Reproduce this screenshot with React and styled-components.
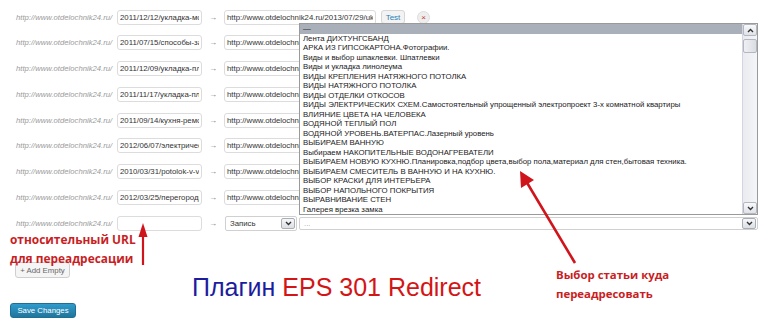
import React from 'react';
import styled, { createGlobalStyle } from 'styled-components';

const GlobalStyle = createGlobalStyle`
  body {
    margin: 0;
    background: #fff;
    font-family: "Liberation Sans", Arial, sans-serif;
  }
`;

const Page = styled.div`
  position: relative;
  width: 768px;
  height: 330px;
  overflow: hidden;
  padding-top: 9px;
  box-sizing: border-box;
`;

const Rows = styled.div`
  display: flex;
  flex-direction: column;
  gap: 9.75px;
`;

const Row = styled.div`
  display: flex;
  align-items: center;
  height: 16px;
  padding-left: 16px;
`;

const SiteLabel = styled.span`
  width: 101px;
  font-size: 7.7px;
  font-style: italic;
  color: #9a9a9a;
  white-space: nowrap;
`;

const Field = styled.input`
  box-sizing: border-box;
  width: ${p => p.$width}px;
  height: 15px;
  padding: 0 2px;
  border: 1px solid #dcdcdc;
  border-radius: 3px;
  font-family: "Liberation Sans", Arial, sans-serif;
  font-size: 7.8px;
  color: #333;
  background: #fff;
  outline: none;
`;

const Arrow = styled.span`
  width: 22px;
  text-align: center;
  font-size: 8px;
  color: #777;
`;

const TestButton = styled.button`
  box-sizing: border-box;
  margin-left: 5px;
  width: 24px;
  height: 14px;
  padding: 0;
  border: 1px solid #d6d6d6;
  border-radius: 3px;
  background: #f3f3f3;
  color: #2a7fb5;
  font-family: "Liberation Sans", Arial, sans-serif;
  font-size: 8px;
`;

const RemoveButton = styled.button`
  box-sizing: border-box;
  margin-left: 12px;
  width: 13px;
  height: 13px;
  padding: 0;
  border: 1px solid #ddd;
  border-radius: 50%;
  background: #eee;
  color: #c0392b;
  font-size: 8px;
  line-height: 11px;
`;

const SelectBox = styled.div`
  box-sizing: border-box;
  display: flex;
  align-items: center;
  justify-content: space-between;
  margin-left: ${p => p.$gap}px;
  width: ${p => p.$width}px;
  height: ${p => p.$height}px;
  padding: 0 1px 0 4px;
  border: 1px solid #d0d0d0;
  border-radius: 2px;
  background: #fff;
  font-size: 7.8px;
  color: ${p => (p.$muted ? '#aaa' : '#333')};
`;

const DropButton = styled.span`
  box-sizing: border-box;
  display: flex;
  align-items: center;
  justify-content: center;
  width: 14px;
  height: 11px;
  border: 1px solid #a9adb4;
  border-radius: 2px;
  background: linear-gradient(#f6f7f9, #dcdfe4);
`;

const DropList = styled.div`
  position: absolute;
  left: 299px;
  top: 23px;
  width: 459px;
  height: 192px;
  box-sizing: border-box;
  display: flex;
  border: 1px solid #9a9a9a;
  background: #fff;
`;

const Options = styled.div`
  flex: 1;
  display: flex;
  flex-direction: column;
`;

const Option = styled.div`
  height: 9.6px;
  line-height: 9.6px;
  padding-left: 3px;
  font-size: 7.8px;
  color: #1a1a1a;
  white-space: nowrap;
  overflow: hidden;
  background: ${p => (p.$selected ? '#aab0b9' : 'transparent')};
`;

const Scrollbar = styled.div`
  width: 14px;
  display: flex;
  flex-direction: column;
  justify-content: space-between;
  background: linear-gradient(90deg, #e9ebf0, #f4f5f8);
  border-left: 1px solid #d3d6dc;
`;

const ScrollTop = styled.div`
  display: flex;
  flex-direction: column;
  gap: 3px;
`;

const ScrollButton = styled.div`
  box-sizing: border-box;
  display: flex;
  align-items: center;
  justify-content: center;
  height: 12px;
  border: 1px solid #b3b7bf;
  border-radius: 2px;
  background: linear-gradient(#f8f9fb, #dfe2e7);
`;

const Thumb = styled.div`
  box-sizing: border-box;
  height: 14px;
  border: 1px solid #b3b7bf;
  border-radius: 2px;
  background: linear-gradient(90deg, #eef0f3, #dadde3);
`;

const AddButton = styled.button`
  box-sizing: border-box;
  display: block;
  margin: 31px 0 0 15px;
  width: 55px;
  height: 16px;
  padding: 0;
  border: 1px solid #cfcfcf;
  border-radius: 3px;
  background: #f5f5f5;
  color: #666;
  font-family: "Liberation Sans", Arial, sans-serif;
  font-size: 7.8px;
`;

const SaveButton = styled.button`
  box-sizing: border-box;
  display: block;
  margin: 25px 0 0 10px;
  width: 66px;
  height: 15px;
  padding: 0;
  border: 1px solid #1f6f94;
  border-radius: 3px;
  background: linear-gradient(#2f9ccd, #21759b);
  color: #fff;
  font-family: "Liberation Sans", Arial, sans-serif;
  font-size: 7.8px;
`;

const Headline = styled.div`
  position: absolute;
  left: 192px;
  top: 272px;
  font-size: 25px;
  line-height: 30px;
  white-space: nowrap;
  color: #d31515;
`;

const Blue = styled.span`
  color: #1c1c9e;
`;

const Note = styled.div`
  position: absolute;
  left: ${p => p.$left}px;
  top: ${p => p.$top}px;
  font-family: "Open Sans", "Noto Sans", sans-serif;
  font-weight: 700;
  font-size: ${p => p.$size}px;
  line-height: ${p => p.$lh}px;
  color: #c81e24;
  white-space: nowrap;
`;

const Overlay = styled.svg`
  position: absolute;
  left: 0;
  top: 0;
  pointer-events: none;
`;

const Chevron = ({ up }) => (
  <svg width="7" height="5" viewBox="0 0 7 5">
    <polyline
      points={up ? '1,4 3.5,1.5 6,4' : '1,1 3.5,3.5 6,1'}
      fill="none"
      stroke="#333"
      strokeWidth="1.4"
    />
  </svg>
);

const site = 'http://www.otdelochnik24.ru/';

// only the first row's Test / remove buttons show, the open list covers the rest
const redirects = [
  { from: '2011/12/12/укладка-мозаики', to: 'http://www.otdelochnik24.ru/2013/07/29/ukladka', tools: true },
  { from: '2011/07/15/способы-замены', to: 'http://www.otdelochnik24.ru/' },
  { from: '2011/12/09/укладка-плитки', to: 'http://www.otdelochnik24.ru/' },
  { from: '2011/11/17/укладка-плитки', to: 'http://www.otdelochnik24.ru/' },
  { from: '2011/09/14/кухня-ремонт', to: 'http://www.otdelochnik24.ru/' },
  { from: '2012/06/07/электричество', to: 'http://www.otdelochnik24.ru/' },
  { from: '2010/03/31/potolok-v-vannoj', to: 'http://www.otdelochnik24.ru/' },
  { from: '2012/03/25/перегородки', to: 'http://www.otdelochnik24.ru/' },
];

const posts = [
  'Лента ДИХТУНГСБАНД',
  'АРКА ИЗ ГИПСОКАРТОНА.Фотографии.',
  'Виды и выбор шпаклевки. Шпатлевки',
  'Виды и укладка линолеума',
  'ВИДЫ КРЕПЛЕНИЯ НАТЯЖНОГО ПОТОЛКА',
  'ВИДЫ НАТЯЖНОГО ПОТОЛКА',
  'ВИДЫ ОТДЕЛКИ ОТКОСОВ',
  'ВИДЫ ЭЛЕКТРИЧЕСКИХ СХЕМ.Самостоятельный упрощенный электропроект 3-х комнатной квартиры',
  'ВЛИЯНИЕ ЦВЕТА НА ЧЕЛОВЕКА',
  'ВОДЯНОЙ ТЕПЛЫЙ ПОЛ',
  'ВОДЯНОЙ УРОВЕНЬ.ВАТЕРПАС.Лазерный уровень',
  'ВЫБИРАЕМ ВАННУЮ',
  'Выбираем НАКОПИТЕЛЬНЫЕ ВОДОНАГРЕВАТЕЛИ',
  'ВЫБИРАЕМ НОВУЮ КУХНЮ.Планировка,подбор цвета,выбор пола,материал для стен,бытовая техника.',
  'ВЫБИРАЕМ СМЕСИТЕЛЬ В ВАННУЮ И НА КУХНЮ.',
  'ВЫБОР КРАСКИ ДЛЯ ИНТЕРЬЕРА',
  'ВЫБОР НАПОЛЬНОГО ПОКРЫТИЯ',
  'ВЫРАВНИВАНИЕ СТЕН',
  'Галерея врезка замка',
];

export default function App() {
  return (
    <>
      <GlobalStyle />
      <Page>
        <Rows>
          {redirects.map((r, i) => (
            <Row key={i}>
              <SiteLabel>{site}</SiteLabel>
              <Field $width={85} defaultValue={r.from} readOnly />
              <Arrow>→</Arrow>
              <Field $width={152} defaultValue={r.to} readOnly />
              {r.tools && (
                <>
                  <TestButton>Test</TestButton>
                  <RemoveButton>×</RemoveButton>
                </>
              )}
            </Row>
          ))}
          <Row>
            <SiteLabel>{site}</SiteLabel>
            <Field $width={85} defaultValue="" readOnly />
            <Arrow>→</Arrow>
            <SelectBox $gap={1} $width={72} $height={15}>
              Запись
              <DropButton>
                <Chevron />
              </DropButton>
            </SelectBox>
            <SelectBox $gap={2} $width={459} $height={13} $muted>
              ...
              <DropButton>
                <Chevron />
              </DropButton>
            </SelectBox>
          </Row>
        </Rows>

        <AddButton>+ Add Empty</AddButton>
        <SaveButton>Save Changes</SaveButton>

        <DropList>
          <Options>
            <Option $selected>—</Option>
            {posts.map(p => (
              <Option key={p}>{p}</Option>
            ))}
          </Options>
          <Scrollbar>
            <ScrollTop>
              <ScrollButton>
                <Chevron up />
              </ScrollButton>
              <Thumb />
            </ScrollTop>
            <ScrollButton>
              <Chevron />
            </ScrollButton>
          </Scrollbar>
        </DropList>

        <Headline>
          <Blue>Плагин</Blue> EPS 301 Redirect
        </Headline>

        <Note $left={10} $top={230} $size={11.9} $lh={19}>
          относительный URL
          <br />
          для переадресации
        </Note>
        <Note $left={556} $top={266} $size={11.4} $lh={18.5}>
          Выбор статьи куда
          <br />
          переадресовать
        </Note>

        <Overlay width="768" height="330" viewBox="0 0 768 330">
          <line x1="143" y1="265" x2="143" y2="234" stroke="#d0141c" strokeWidth="2.2" />
          <polygon points="143,223 138.5,237 147.5,237" fill="#d0141c" />
          <line x1="575" y1="263" x2="526" y2="181" stroke="#d0141c" strokeWidth="2.6" />
          <polygon points="520,171 521,188 534,180" fill="#d0141c" />
        </Overlay>
      </Page>
    </>
  );
}
